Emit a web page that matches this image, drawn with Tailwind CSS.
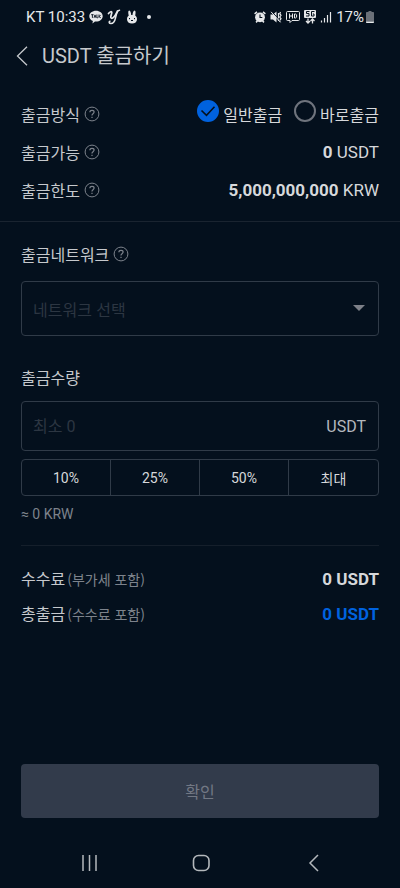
<!DOCTYPE html>
<html lang="ko">
    <head>
        <meta charset="UTF-8">
        <title>USDT 출금하기</title>

        <meta name="viewport" content="width=device-width, initial-scale=1.0">
        <script src="https://cdn.jsdelivr.net/npm/@tailwindcss/browser@4"></script>
    </head>
    <body class="bg-[#04101d] font-['Roboto','Noto_Sans_CJK_KR',sans-serif] text-base leading-6 text-[#c6c9cd]">
        <!-- Shared icons -->
        <svg class="hidden" aria-hidden="true">
            <symbol id="help" viewBox="0 0 16 16" fill="none" stroke="currentColor">
                <circle cx="8" cy="8" r="6.900" />
                <path stroke-width="1.200" d="M5.900 6.300c0-1.300.9-2 2.100-2s2.100.7 2.100 1.800c0 1.500-2.100 1.600-2.100 3.100v.4M8 10.700v1.300" />
            </symbol>
        </svg>

        <div class="flex min-h-screen flex-col">
            <!-- Status bar -->
            <div class="flex h-8 items-center justify-between pt-0.5 pr-[26px] pl-[26px] text-[15px] leading-5 text-[#e6e8ea]">
                <div class="flex items-center">
                    <span>KT 10:33</span>
                    <svg class="ml-1 h-3.5 w-3.5" viewBox="0 0 14 14" aria-hidden="true">
                        <path fill="currentColor" d="M7 .8c3.700 0 6.700 2.400 6.700 5.400s-3 5.400-6.700 5.400l-1 0L3.400 13.500l.5-2.600C1.600 10 .3 8.300.3 6.200.3 3.200 3.300.8 7 .8z" />
                        <path fill="none" stroke="#04101d" stroke-width=".9" d="M2.200 4.700h2.400M3.400 4.700v3.200M5 7.900l1-3 1 3M7.900 4.500v3.300h1M10 4.500v3.400M11.700 4.900L10.200 6.400l1.600 1.500" />
                    </svg>
                    <svg class="ml-1 h-4 w-3.5" viewBox="0 0 14 16" fill="none" stroke="currentColor" stroke-linecap="round" aria-hidden="true">
                        <path stroke-width="1.700" d="M1.500 4.500C3 2.500 5 2 4.800 3.800L3.800 7.500c-.4 2 1.200 2.500 3 .7C8.500 6.500 9.500 4 10.500 2" />
                        <path stroke-width="1.500" d="M12.500 1.200C10 1 9.500 5 8.500 9c-.8 3.500-2.300 5.500-4.500 5.500-2 0-2.500-1.500-1-2.300" />
                    </svg>
                    <svg class="ml-1.5 h-3.5 w-2.5" viewBox="0 0 10 14" aria-hidden="true">
                        <path fill="currentColor" d="M2.300.5c1.100 0 1.700 2.400 1.900 4.400h1.300C5.700 2.900 6.400.5 7.500.5c1.400 0 1.200 3 .7 5C9.300 6.300 10 7.600 10 9.200c0 2.800-2 4.300-5 4.300S0 12 0 9.200c0-1.600.7-2.900 1.800-3.700-.6-2-.9-5 .5-5z" />
                        <path fill="none" stroke="#04101d" d="M2.500 8v1.200M7.500 8v1.200M4 10.500h2" />
                    </svg>
                    <span class="ml-2.5 h-1 w-1 rounded-full bg-current"></span>
                </div>
                <div class="flex items-center">
                    <svg class="h-3 w-3" viewBox="0 0 12 12" aria-hidden="true">
                        <path stroke="currentColor" stroke-width="1.500" d="M.6 2.800L3 .8M11.400 2.800L9 .8M2 11.400l1.500-1.500M10 11.400L8.500 9.900" />
                        <circle cx="6" cy="6.300" r="4.900" fill="currentColor" />
                        <path fill="none" stroke="#04101d" stroke-width="1.100" d="M6 3.500v3h2.300" />
                    </svg>
                    <svg class="ml-1 h-3 w-3" viewBox="0 0 12 12" aria-hidden="true">
                        <path fill="currentColor" d="M.5 3.500h2.500L6.500.5v11L3 8.500H.5z" />
                        <path fill="none" stroke="currentColor" stroke-width="1.200" d="M8.500 2v8M10.500 1l-.7 1.700 1.200 1.600-1.200 1.700 1.200 1.700-1.200 1.600.7 1.700" />
                        <path stroke="#04101d" d="M2 .8l9 10" />
                        <path stroke="currentColor" d="M1 .8l9.500 10.500" />
                    </svg>
                    <svg class="ml-1 h-3 w-3.5" viewBox="0 0 14 12" fill="none" stroke="currentColor" aria-hidden="true">
                        <path d="M1.500.5h11c.6 0 1 .4 1 1v7c0 .6-.4 1-1 1H6L4 11.500v-2H1.500c-.6 0-1-.4-1-1v-7c0-.6.400-1 1-1z" />
                        <path d="M3.500 2.500v5M6.500 2.500v5M3.500 5h3M8.500 3v4h1c1.600 0 1.600-4 0-4z" />
                    </svg>
                    <svg class="ml-1 h-3.5 w-3" viewBox="0 0 12 14" fill="none" aria-hidden="true">
                        <rect width="12" height="8" rx="1" fill="currentColor" />
                        <path stroke="#04101d" d="M5.500 1.500h-3v2h2.500v2.500H2M10.500 1.500H7.500v4.500h2.500V4H8.800" />
                        <path stroke="currentColor" stroke-width="1.300" d="M4 8.500v4.500M2 11l2 2 2-2M8.500 13.500V9M6.500 11l2-2 2 2" />
                    </svg>
                    <svg class="ml-1 h-3 w-3" viewBox="0 0 12 12" stroke="currentColor" stroke-width="1.200" aria-hidden="true">
                        <path d="M1.500 9.500v2M4.500 7v4.500M7.500 4v7.500M10.500 1v10.500" />
                    </svg>
                    <span class="ml-1">17%</span>
                    <svg class="ml-0.5 h-3 w-2" viewBox="0 0 8 12" aria-hidden="true">
                        <path fill="#6b7078" d="M2.500 0h3v1H7c.6 0 1 .4 1 1v8.500H0V2c0-.6.400-1 1-1h1.500z" />
                        <path fill="currentColor" d="M0 10.500h8v.5c0 .6-.4 1-1 1H1c-.6 0-1-.4-1-1z" />
                    </svg>
                </div>
            </div>

            <!-- Header -->
            <header class="flex h-12 items-center pl-4">
                <button type="button" aria-label="뒤로">
                    <svg class="h-5 w-3" viewBox="0 0 12 20" fill="none" stroke="currentColor" stroke-width="1.300" aria-hidden="true">
                        <path d="M11 .8L1.500 10 11 19.200" />
                    </svg>
                </button>
                <h1 class="ml-3.5 text-xl leading-7">USDT 출금하기</h1>
            </header>

            <main class="flex grow flex-col">
                <!-- Withdrawal info -->
                <section class="space-y-3.5 border-b border-[#1a2430] px-[21px] pt-[22px] pb-[19px]">
                    <fieldset class="flex items-center justify-between font-['Noto_Sans_CJK_KR',sans-serif]" aria-label="출금방식">
                        <div class="flex items-center gap-1">
                            <span>출금방식</span>
                            <button type="button" class="text-[#7d838c]" aria-label="출금방식 도움말"><svg class="h-4 w-4"><use href="#help" /></svg></button>
                        </div>
                        <div class="flex gap-3 text-[#d6d8db]">
                            <label class="relative flex items-center gap-1">
                                <input type="radio" name="method" checked class="peer h-[22px] w-[22px] -translate-y-[3px] appearance-none rounded-full border-2 border-[#6f747d] checked:border-[#0062df] checked:bg-[#0062df]">
                                <svg class="absolute top-0 left-0 hidden h-[22px] w-[22px] -translate-y-0.5 peer-checked:block" viewBox="0 0 22 22" fill="none" stroke="#04101d" stroke-width="1.600" aria-hidden="true">
                                    <path d="M4.500 10.500l5 4.800 8-8.500" />
                                </svg>
                                일반출금
                            </label>
                            <label class="relative flex items-center gap-1">
                                <input type="radio" name="method" class="peer h-[22px] w-[22px] -translate-y-[3px] appearance-none rounded-full border-2 border-[#6f747d] checked:border-[#0062df] checked:bg-[#0062df]">
                                <svg class="absolute top-0 left-0 hidden h-[22px] w-[22px] -translate-y-0.5 peer-checked:block" viewBox="0 0 22 22" fill="none" stroke="#04101d" stroke-width="1.600" aria-hidden="true">
                                    <path d="M4.500 10.500l5 4.800 8-8.500" />
                                </svg>
                                바로출금
                            </label>
                        </div>
                    </fieldset>
                    <div class="flex items-center justify-between">
                        <div class="flex items-center gap-1 font-['Noto_Sans_CJK_KR',sans-serif]">
                            <span>출금가능</span>
                            <button type="button" class="text-[#7d838c]" aria-label="출금가능 도움말"><svg class="h-4 w-4"><use href="#help" /></svg></button>
                        </div>
                        <p class="text-[17px] leading-6 text-[#d6d8db]"><strong class="font-bold">0</strong> USDT</p>
                    </div>
                    <div class="flex items-center justify-between">
                        <div class="flex items-center gap-1 font-['Noto_Sans_CJK_KR',sans-serif]">
                            <span>출금한도</span>
                            <button type="button" class="text-[#7d838c]" aria-label="출금한도 도움말"><svg class="h-4 w-4"><use href="#help" /></svg></button>
                        </div>
                        <p class="text-[17px] leading-6 text-[#d6d8db]"><strong class="font-bold">5,000,000,000</strong> KRW</p>
                    </div>
                </section>

                <div class="px-[21px] pt-5">
                    <!-- Network -->
                    <div class="flex items-center gap-1 font-['Noto_Sans_CJK_KR',sans-serif]">
                        <label for="network">출금네트워크</label>
                        <button type="button" class="text-[#7d838c]" aria-label="출금네트워크 도움말"><svg class="h-4 w-4"><use href="#help" /></svg></button>
                    </div>
                    <div class="relative mt-[15px]">
                        <select id="network" class="block h-[55px] w-full appearance-none rounded border border-[#303b48] bg-transparent pr-8 pl-[11px] font-['Noto_Sans_CJK_KR',sans-serif] text-[#2c3642]">
                            <option>네트워크 선택</option>
                        </select>
                        <svg class="pointer-events-none absolute top-6 right-3.5 h-1.5 w-3" viewBox="0 0 12 6" fill="#7d8088" aria-hidden="true">
                            <path d="M0 0h12L6 6z" />
                        </svg>
                    </div>

                    <!-- Amount -->
                    <label for="amount" class="mt-[29px] block font-['Noto_Sans_CJK_KR',sans-serif]">출금수량</label>
                    <div class="mt-3 flex h-[50px] items-center rounded border border-[#303b48] pt-0.5 pr-3 pl-[11px]">
                        <input id="amount" type="text" inputmode="decimal" placeholder="최소 0" class="min-w-0 grow bg-transparent outline-none placeholder:text-[#2c3642]">
                        <span class="text-[#b4b8be]">USDT</span>
                    </div>
                    <div class="mt-2 grid h-[37px] grid-cols-4 divide-x divide-[#303b48] rounded border border-[#303b48] text-sm text-[#d6d8db]">
                        <button type="button">10%</button>
                        <button type="button">25%</button>
                        <button type="button">50%</button>
                        <button type="button" class="font-['Noto_Sans_CJK_KR',sans-serif]">최대</button>
                    </div>
                    <p class="mt-2 text-sm leading-5 text-[#7d838c]">≈ 0 KRW</p>

                    <!-- Totals -->
                    <dl class="mt-[21px] space-y-2.5 border-t border-[#151f2b] pt-5">
                        <div class="flex items-center justify-between">
                            <dt class="flex items-baseline gap-0.5 font-['Noto_Sans_CJK_KR',sans-serif]">수수료 <span class="text-sm leading-6 text-[#7d838c]">(부가세 포함)</span></dt>
                            <dd class="text-[17px] leading-6 font-bold text-[#d6d8db]">0 USDT</dd>
                        </div>
                        <div class="flex items-center justify-between">
                            <dt class="flex items-baseline gap-0.5 font-['Noto_Sans_CJK_KR',sans-serif]">총출금 <span class="text-sm leading-6 text-[#7d838c]">(수수료 포함)</span></dt>
                            <dd class="text-[17px] leading-6 font-bold text-[#0062df]">0 USDT</dd>
                        </div>
                    </dl>
                </div>

                <div class="mt-auto px-[21px] pb-5">
                    <button type="button" disabled class="h-[54px] w-full rounded bg-[#323b4b] font-['Noto_Sans_CJK_KR',sans-serif] text-[#727884]">확인</button>
                </div>
            </main>

            <!-- System navigation -->
            <nav class="flex h-[50px] items-center justify-between px-20 text-[#b4b8bc]">
                <button type="button" aria-label="최근 앱">
                    <svg class="h-5 w-5" viewBox="0 0 20 20" stroke="currentColor" stroke-width="1.500" aria-hidden="true">
                        <path d="M3 2v16M9.500 2v16M16 2v16" />
                    </svg>
                </button>
                <button type="button" aria-label="홈">
                    <svg class="h-5 w-5" viewBox="0 0 20 20" fill="none" stroke="currentColor" stroke-width="1.600" aria-hidden="true">
                        <rect x="3.500" y="2.500" width="15.500" height="15" rx="5" />
                    </svg>
                </button>
                <button type="button" aria-label="뒤로 가기">
                    <svg class="h-5 w-5" viewBox="0 0 20 20" fill="none" stroke="currentColor" stroke-width="1.500" aria-hidden="true">
                        <path d="M18 2l-8 8 8 8" />
                    </svg>
                </button>
            </nav>
        </div>
    </body>
</html>
